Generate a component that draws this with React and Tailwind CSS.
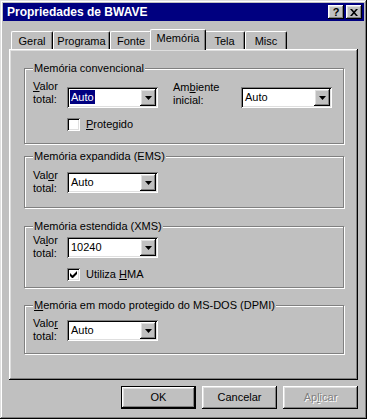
import React from "react";

const raised =
  "shadow-[inset_-1px_-1px_#000,inset_1px_1px_#fff,inset_-2px_-2px_#808080,inset_2px_2px_#dfdfdf]";
const sunken =
  "shadow-[inset_1px_1px_#808080,inset_-1px_-1px_#fff,inset_2px_2px_#000,inset_-2px_-2px_#dfdfdf]";

function Combo({ value, selected, className = "" }) {
  return (
    <div
      className={`relative w-[91px] h-[21px] bg-white ${sunken} flex items-center pl-[3px] pr-[2px] ${className}`}
    >
      <span
        className={`flex-1 leading-[13px] ${
          selected ? "" : "pl-[1px]"
        }`}
      >
        {selected ? (
          <span className="bg-[#000080] text-white px-[1px] py-[1px]">{value}</span>
        ) : (
          value
        )}
      </span>
      <div
        className={`w-[16px] h-[17px] bg-[#c0c0c0] ${raised} flex items-center justify-center`}
      >
        <svg width="7" height="4" viewBox="0 0 7 4">
          <path d="M0 0h7L3.5 4z" fill="#000" />
        </svg>
      </div>
    </div>
  );
}

function Check({ checked, children }) {
  return (
    <div className="flex items-center gap-[6px]">
      <div className={`w-[13px] h-[13px] bg-white ${sunken} flex items-center justify-center`}>
        {checked && (
          <svg width="7" height="7" viewBox="0 0 7 7">
            <path d="M0 2v3l2 2h1l4-4V0L2.5 4.5z" fill="#000" />
          </svg>
        )}
      </div>
      <span className="leading-[13px]">{children}</span>
    </div>
  );
}

function Group({ title, className = "", children }) {
  return (
    <div
      className={`relative w-[320px] border border-[#808080] shadow-[inset_1px_1px_#fff,1px_1px_#fff] ${className}`}
    >
      <span className="absolute left-[8px] top-[-7px] bg-[#c0c0c0] px-[1px] leading-[13px]">
        {title}
      </span>
      {children}
    </div>
  );
}

function ValorLabel({ u }) {
  const w = "Valor";
  return (
    <div className="w-[34px] leading-[13px]">
      <div>
        {w.split("").map((c, i) =>
          i === u ? (
            <span key={i} className="underline">
              {c}
            </span>
          ) : (
            <span key={i}>{c}</span>
          )
        )}
      </div>
      <div>total:</div>
    </div>
  );
}

const tabs = [
  { name: "Geral", w: "w-[42px]" },
  { name: "Programa", w: "w-[57px]" },
  { name: "Fonte", w: "w-[42px]" },
  { name: "Memória", w: "w-[56px]", active: true },
  { name: "Tela", w: "w-[41px]" },
  { name: "Misc", w: "w-[42px]" },
];

export default function App() {
  return (
    <div
      className={`w-[367px] h-[419px] bg-[#c0c0c0] p-[3px] flex flex-col text-[11px] text-black font-['Liberation_Sans',Arial,sans-serif] shadow-[inset_-1px_-1px_#000,inset_1px_1px_#dfdfdf,inset_-2px_-2px_#808080,inset_2px_2px_#fff]`}
    >
      {/* title bar */}
      <div className="h-[18px] bg-[#000080] flex items-center pl-[4px] pr-[2px]">
        <span className="flex-1 text-white font-bold text-[12px] leading-[14px]">
          Propriedades de BWAVE
        </span>
        <div
          className={`w-[16px] h-[14px] bg-[#c0c0c0] ${raised} flex items-center justify-center font-bold text-[11px] leading-[11px]`}
        >
          ?
        </div>
        <div
          className={`ml-[2px] w-[16px] h-[14px] bg-[#c0c0c0] ${raised} flex items-center justify-center`}
        >
          <svg width="8" height="7" viewBox="0 0 8 7">
            <path
              d="M0 0h2l2 2.2L6 0h2L5 3.5 8 7H6L4 4.8 2 7H0l3-3.5z"
              fill="#000"
            />
          </svg>
        </div>
      </div>

      <div className="px-[6px] mt-[8px] flex flex-col">
        {/* tabs */}
        <div className="flex items-end h-[20px] pl-[2px] relative z-10">
          {tabs.map((t) =>
            t.active ? (
              <div
                key={t.name}
                className={`${t.w} -mx-[2px] h-[21px] -mb-[1px] bg-[#c0c0c0] border-l border-t border-white rounded-tl-[2px] shadow-[inset_-1px_0_#808080] border-r border-r-black rounded-tr-[2px] flex items-start justify-center pt-[2px] leading-[13px] relative z-10`}
              >
                {t.name}
              </div>
            ) : (
              <div
                key={t.name}
                className={`${t.w} h-[18px] border-l border-t border-white rounded-tl-[2px] border-r border-r-black rounded-tr-[2px] shadow-[inset_-1px_0_#808080] flex items-start justify-center pt-[3px] leading-[13px]`}
              >
                {t.name}
              </div>
            )
          )}
        </div>

        {/* panel */}
        <div
          className={`h-[331px] w-[349px] flex flex-col items-start px-[15px] shadow-[inset_-1px_-1px_#000,inset_1px_1px_#fff,inset_-2px_-2px_#808080,inset_2px_2px_#dfdfdf]`}
        >
          <Group title="Memória convencional" className="mt-[19px] h-[76px]">
            <div className="flex items-start mt-[11px] ml-[8px]">
              <ValorLabel u={0} />
              <Combo value="Auto" selected className="mt-[7px]" />
              <div className="ml-[15px] w-[68px] leading-[13px] mt-[1px]">
                <div>
                  Am<span className="underline">b</span>iente
                </div>
                <div>inicial:</div>
              </div>
              <Combo value="Auto" className="mt-[7px]" />
            </div>
            <div className="ml-[42px] mt-[10px]">
              <Check>
                <span className="underline">P</span>rotegido
              </Check>
            </div>
          </Group>

          <Group title="Memória expandida (EMS)" className="mt-[12px] h-[52px]">
            <div className="flex items-start mt-[12px] ml-[8px]">
              <ValorLabel u={3} />
              <Combo value="Auto" className="mt-[3px]" />
            </div>
          </Group>

          <Group title="Memória estendida (XMS)" className="mt-[18px] h-[62px]">
            <div className="flex items-start mt-[7px] ml-[8px]">
              <ValorLabel u={2} />
              <Combo value="10240" className="mt-[3px]" />
            </div>
            <div className="ml-[42px] mt-[8px]">
              <Check checked>
                Utiliza <span className="underline">H</span>MA
              </Check>
            </div>
          </Group>

          <Group
            title={
              <>
                <span className="underline">M</span>emória em modo protegido do MS-DOS (DPMI)
              </>
            }
            className="mt-[17px] h-[49px]"
          >
            <div className="flex items-start mt-[11px] ml-[8px]">
              <ValorLabel u={4} />
              <Combo value="Auto" className="mt-[3px]" />
            </div>
          </Group>
        </div>

        {/* buttons */}
        <div className="flex justify-end gap-[6px] mt-[6px]">
          <div className="w-[75px] h-[23px] border border-black">
            <div
              className={`w-full h-full ${raised} flex items-center justify-center leading-[13px]`}
            >
              OK
            </div>
          </div>
          <div
            className={`w-[75px] h-[23px] ${raised} flex items-center justify-center leading-[13px]`}
          >
            Cancelar
          </div>
          <div
            className={`w-[75px] h-[23px] ${raised} flex items-center justify-center leading-[13px] text-[#808080] [text-shadow:1px_1px_#fff]`}
          >
            Ap<span className="underline">l</span>icar
          </div>
        </div>
      </div>
    </div>
  );
}
